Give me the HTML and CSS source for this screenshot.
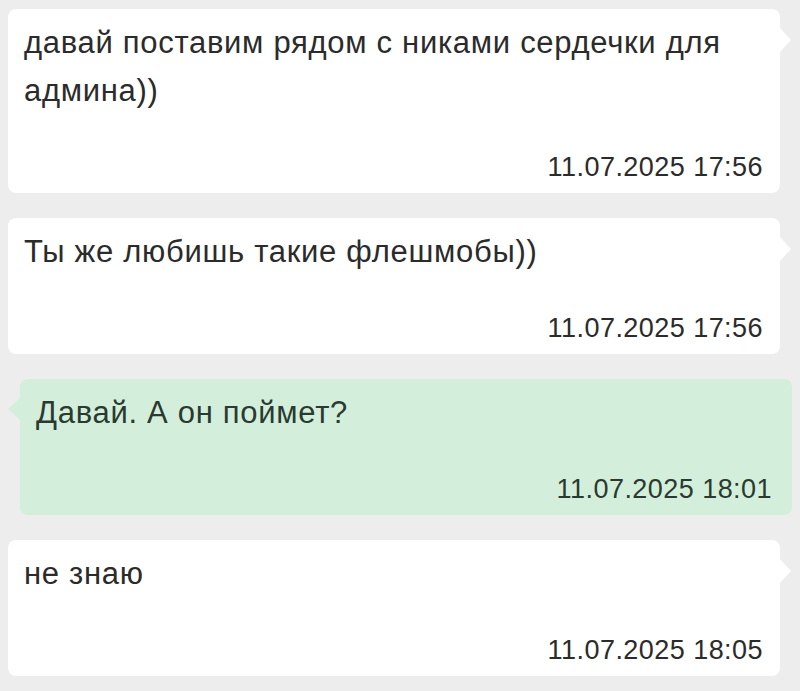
FILE: index.html
```html
<!DOCTYPE html>
<html lang="ru">
<head>
    <meta charset="UTF-8">
    <meta name="viewport" content="width=device-width, initial-scale=1.0">
    <title>Сообщения</title>
    <link rel="stylesheet" href="styles.css">
</head>
<body>
    <div class="chat">
        <div class="msg incoming">
            <div class="text">давай поставим рядом с никами сердечки для админа))</div>
            <div class="time">11.07.2025 17:56</div>
        </div>
        <div class="msg incoming">
            <div class="text">Ты же любишь такие флешмобы))</div>
            <div class="time">11.07.2025 17:56</div>
        </div>
        <div class="msg outgoing">
            <div class="text">Давай. А он поймет?</div>
            <div class="time">11.07.2025 18:01</div>
        </div>
        <div class="msg incoming">
            <div class="text">не знаю</div>
            <div class="time">11.07.2025 18:05</div>
        </div>
    </div>
</body>
</html>
```

FILE: styles.css
```css
body {
    margin: 0;
    padding: 9px 8px 0;
    background: #ededed;
    font-family: "Liberation Sans", Arial, sans-serif;
    color: #2b2b2b;
}
.chat {
    display: flex;
    flex-direction: column;
    gap: 25px;
}
.msg {
    position: relative;
    border-radius: 8px;
    padding: 10px 17px 8px 16px;
}
.msg .text {
    font-size: 31px;
    line-height: 48px;
    letter-spacing: 0.7px;
}
.msg .time {
    margin-top: 34px;
    font-size: 27px;
    line-height: 36px;
    letter-spacing: 0.45px;
    text-align: right;
}
.incoming {
    background: #fff;
    margin-right: 12px;
}
.incoming::after {
    content: "";
    position: absolute;
    top: 19px;
    right: -11px;
    border-top: 12px solid transparent;
    border-bottom: 12px solid transparent;
    border-left: 11px solid #fff;
}
.outgoing {
    background: #d3efdb;
    color: #2a3a30;
    margin-left: 12px;
    padding: 10px 20px 8px 16px;
}
.outgoing::before {
    content: "";
    position: absolute;
    top: 19px;
    left: -12px;
    border-top: 11px solid transparent;
    border-bottom: 11px solid transparent;
    border-right: 12px solid #d3efdb;
}
```
